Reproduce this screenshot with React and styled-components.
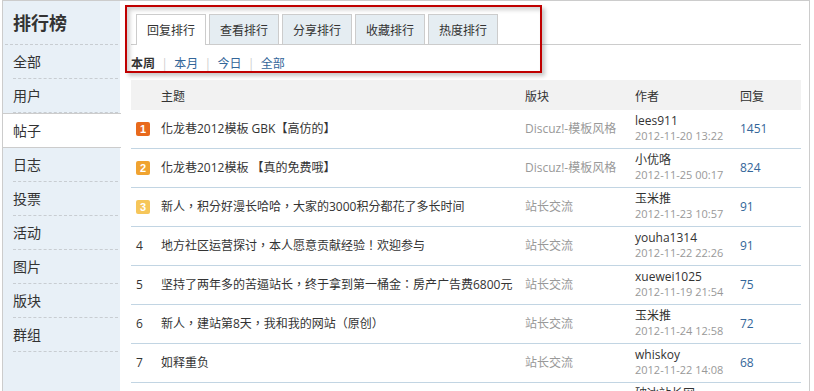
import styled, {createGlobalStyle} from 'styled-components';

const GlobalStyle = createGlobalStyle`
  html, body {
    margin: 0;
    padding: 0;
    background: #fff;
  }
  body {
    font-family: "Open Sans", "Noto Sans CJK SC", sans-serif;
    font-size: 12px;
    color: #333;
    overflow: hidden;
  }
`;

const MENU = ['全部', '用户', '帖子', '日志', '投票', '活动', '图片', '版块', '群组'];
const TABS = ['回复排行', '查看排行', '分享排行', '收藏排行', '热度排行'];
const RANGES = ['本周', '本月', '今日', '全部'];

const ROWS = [
  {title: '化龙巷2012模板 GBK【高仿的】', forum: 'Discuz!-模板风格', author: 'lees911', date: '2012-11-20 13:22', replies: 1451},
  {title: '化龙巷2012模板 【真的免费哦】', forum: 'Discuz!-模板风格', author: '小优咯', date: '2012-11-25 00:17', replies: 824},
  {title: '新人，积分好漫长哈哈，大家的3000积分都花了多长时间', forum: '站长交流', author: '玉米推', date: '2012-11-23 10:57', replies: 91},
  {title: '地方社区运营探讨，本人愿意贡献经验！欢迎参与', forum: '站长交流', author: 'youha1314', date: '2012-11-22 22:26', replies: 91},
  {title: '坚持了两年多的苦逼站长，终于拿到第一桶金：房产广告费6800元', forum: '站长交流', author: 'xuewei1025', date: '2012-11-19 21:54', replies: 75},
  {title: '新人，建站第8天，我和我的网站（原创）', forum: '站长交流', author: '玉米推', date: '2012-11-24 12:58', replies: 72},
  {title: '如释重负', forum: '站长交流', author: 'whiskoy', date: '2012-11-22 14:08', replies: 68},
  {title: '站长必备的几个工具', forum: '站长交流', author: '破冰站长网', date: '2012-11-21 09:12', replies: 60},
];

const BADGE_COLORS = ['#e8691c', '#f0a330', '#f6c65a'];

function App() {
  return (
    <>
      <GlobalStyle />
      <S.Page>
        <S.Sidebar>
          <S.SideTitle>排行榜</S.SideTitle>
          {MENU.map((m) => (
            <S.SideItem key={m} active={m === '帖子'}>
              {m}
            </S.SideItem>
          ))}
        </S.Sidebar>
        <S.Main>
          <S.TabBar>
            {TABS.map((t, i) => (
              <S.Tab key={t} active={i === 0}>
                {t}
              </S.Tab>
            ))}
          </S.TabBar>
          <S.Filter>
            {RANGES.map((r, i) => (
              <S.FilterItem key={r}>
                {i > 0 && <S.Sep>|</S.Sep>}
                {i === 0 ? <S.Current>{r}</S.Current> : <S.Link>{r}</S.Link>}
              </S.FilterItem>
            ))}
          </S.Filter>
          <S.Table>
            <S.HeadRow>
              <span />
              <span>主题</span>
              <span>版块</span>
              <span>作者</span>
              <span>回复</span>
            </S.HeadRow>
            {ROWS.map((row, i) => (
              <S.Row key={i}>
                <S.RankCell>
                  {i < 3 ? <S.Badge color={BADGE_COLORS[i]}>{i + 1}</S.Badge> : i + 1}
                </S.RankCell>
                <S.Title>{row.title}</S.Title>
                <S.Forum>{row.forum}</S.Forum>
                <S.Author>
                  <S.Name>{row.author}</S.Name>
                  <S.Date>{row.date}</S.Date>
                </S.Author>
                <S.Replies>{row.replies}</S.Replies>
              </S.Row>
            ))}
          </S.Table>
          <S.Highlight />
        </S.Main>
      </S.Page>
    </>
  );
}
export default App;

const Page = styled.div`
  display: flex;
  width: 806px;
  height: 420px;
  margin-left: 2px;
  border: 1px solid #ccc;
  background: #fff;
`;

const Sidebar = styled.div`
  width: 117px;
  flex-shrink: 0;
  background-color: #e8f0f7;
`;

const SideTitle = styled.div`
  height: 43px;
  line-height: 43px;
  margin: 0 2px;
  padding-left: 8px;
  border-bottom: 1px dashed #c8cdd2;
  font-size: 18px;
  font-weight: bold;
  font-family: "Noto Sans CJK SC", sans-serif;
  color: #333;
`;

const SideItem = styled.div`
  height: 33px;
  line-height: 33px;
  font-size: 14px;
  font-family: "Noto Sans CJK SC", sans-serif;
  color: #333;
  margin: ${({active}) => (active ? '0 -1px 0 0' : '0 2px 0 10px')};
  padding-left: ${({active}) => (active ? '10px' : '0')};
  background-color: ${({active}) => (active ? '#fff' : 'transparent')};
  border-top: ${({active}) => (active ? '1px solid #ccc' : 'none')};
  border-bottom: ${({active}) => (active ? '1px solid #ccc' : '1px dashed #c8cdd2')};
  position: relative;
`;

const Main = styled.div`
  position: relative;
  flex: 1;
  padding: 13px 8px 0 11px;
`;

const TabBar = styled.div`
  display: flex;
  gap: 3px;
  height: 30px;
  padding-left: 5px;
  border-bottom: 1px solid #ccc;
`;

const Tab = styled.div`
  width: 68px;
  height: ${({active}) => (active ? '30px' : '29px')};
  line-height: 29px;
  text-align: center;
  border: 1px solid #ccc;
  border-bottom: none;
  background-color: ${({active}) => (active ? '#fff' : '#e5edf2')};
  font-family: "Noto Sans CJK SC", sans-serif;
  font-size: 12px;
  color: #333;
`;

const Filter = styled.div`
  display: flex;
  align-items: center;
  height: 35px;
  font-family: "Noto Sans CJK SC", sans-serif;
  font-size: 12px;
`;

const FilterItem = styled.span`
  display: flex;
  align-items: center;
`;

const Sep = styled.span`
  color: #ccc;
  margin: 0 8px 0 8px;
`;

const Current = styled.span`
  font-weight: bold;
  color: #333;
`;

const Link = styled.span`
  color: #369;
`;

const Table = styled.div`
  display: flex;
  flex-direction: column;
`;

const HeadRow = styled.div`
  display: grid;
  grid-template-columns: 30px 364px 110px 105px 1fr;
  align-items: center;
  height: 30px;
  background-color: #f2f2f2;
  font-family: "Noto Sans CJK SC", sans-serif;
  color: #333;
`;

const Row = styled.div`
  display: grid;
  grid-template-columns: 30px 364px 110px 105px 1fr;
  align-items: center;
  height: 38px;
  border-bottom: 1px solid #c2d5e3;
`;

const RankCell = styled.span`
  padding-left: 5px;
  line-height: 14px;
  color: #333;
`;

const Badge = styled.span`
  display: block;
  width: 14px;
  height: 14px;
  line-height: 14px;
  border-radius: 2px;
  text-align: center;
  background-color: ${({color}) => color};
  color: #fff;
  font-family: "Liberation Sans", sans-serif;
  font-size: 11px;
  font-weight: bold;
`;

const Title = styled.span`
  white-space: nowrap;
  line-height: 16px;
  color: #333;
  font-family: "Open Sans", "Noto Sans CJK TC", sans-serif;
`;

const Forum = styled.span`
  color: #999;
  white-space: nowrap;
  line-height: 16px;
`;

const Author = styled.span`
  display: flex;
  flex-direction: column;
  padding-bottom: 2px;
`;

const Name = styled.span`
  line-height: 15px;
  color: #333;
  white-space: nowrap;
`;

const Date = styled.span`
  line-height: 15px;
  font-size: 11px;
  color: #999;
  white-space: nowrap;
`;

const Replies = styled.span`
  color: #369;
  line-height: 16px;
`;

const Highlight = styled.div`
  position: absolute;
  left: 5px;
  top: 4px;
  width: 417px;
  height: 68px;
  box-sizing: border-box;
  border: 2px solid #c00000;
  box-shadow: 3px 3px 4px rgba(0, 0, 0, 0.22), inset 3px 3px 4px rgba(0, 0, 0, 0.18);
  pointer-events: none;
`;

const S = {
  Page,
  Sidebar,
  SideTitle,
  SideItem,
  Main,
  TabBar,
  Tab,
  Filter,
  FilterItem,
  Sep,
  Current,
  Link,
  Table,
  HeadRow,
  Row,
  RankCell,
  Badge,
  Title,
  Forum,
  Author,
  Name,
  Date,
  Replies,
  Highlight,
};
